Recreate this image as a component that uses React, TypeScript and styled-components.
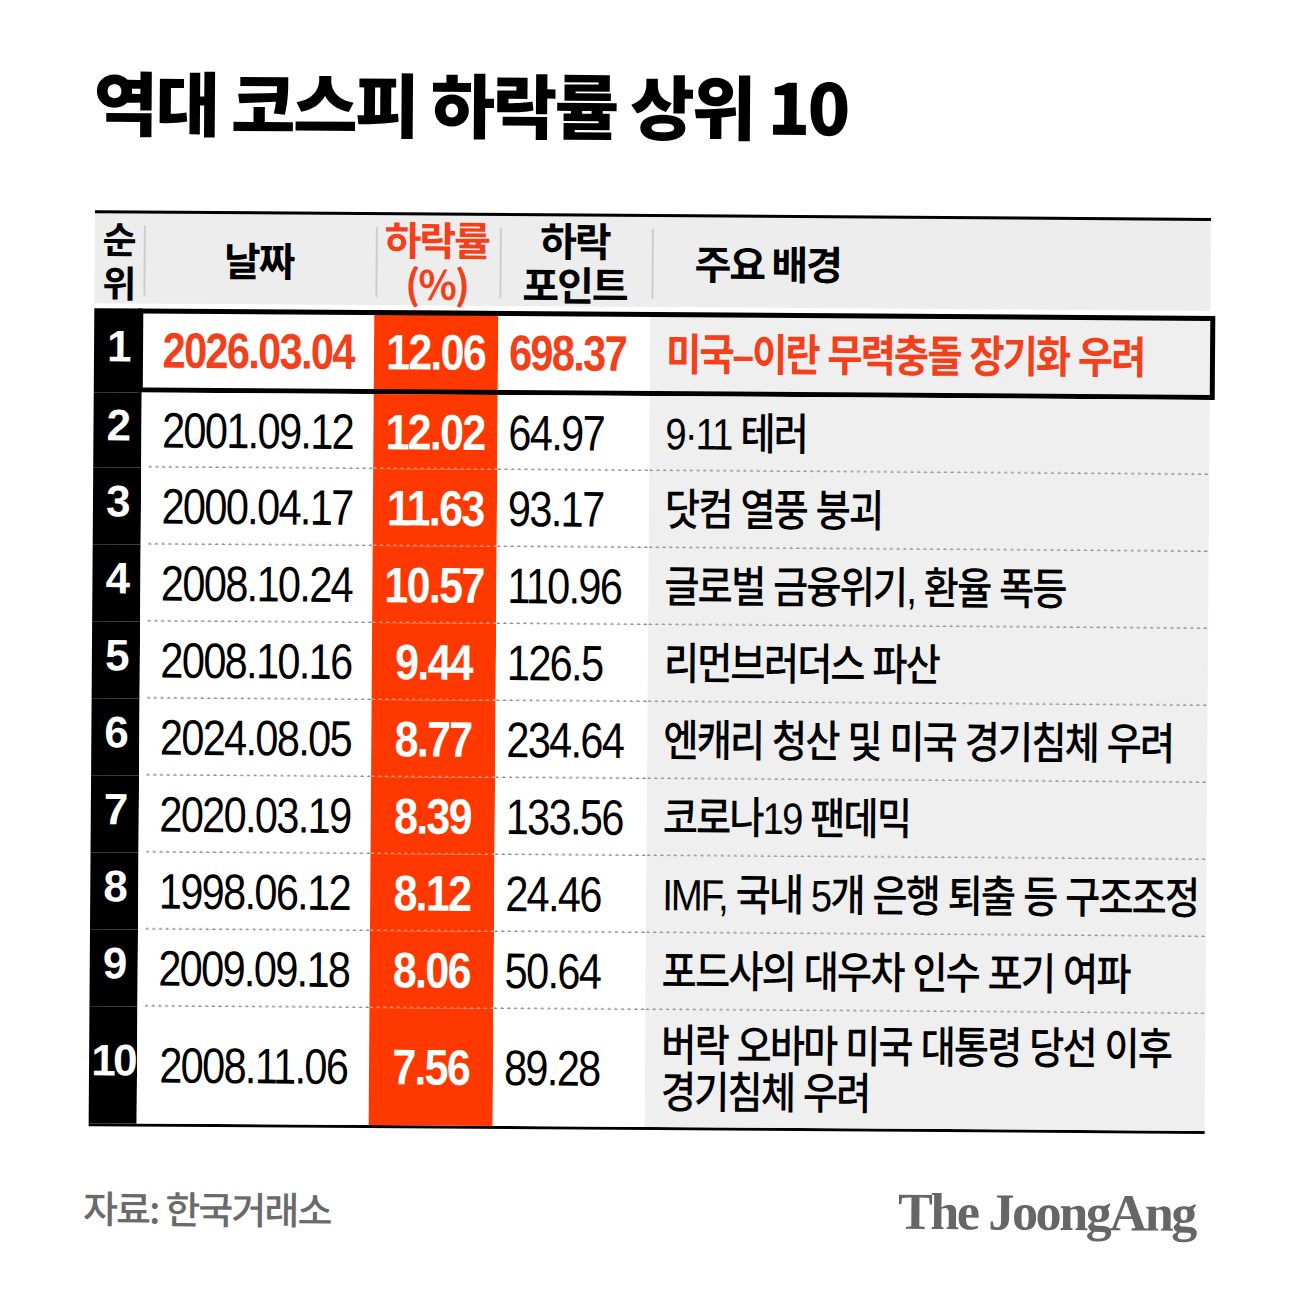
import React from 'react';
import styled, { createGlobalStyle } from 'styled-components';

const RED = '#ff3800';
const RED_TEXT = '#f3401a';
const COLS = '48px 232px 124px 152px 560px';
const LATIN = '"Liberation Sans", "Noto Sans CJK KR", sans-serif';
const KOREAN = '"Noto Sans CJK KR", "Noto Sans", sans-serif';

const GlobalStyle = createGlobalStyle`
  html, body { margin: 0; padding: 0; background: #fff; }
  body { font-family: ${KOREAN}; }
  * { box-sizing: border-box; }
`;

const Frame = styled.div`
  width: 1290px;
  height: 1290px;
  overflow: hidden;
  background: #fff;
`;

const Canvas = styled.div`
  width: 1290px;
  height: 1290px;
  padding: 62px 0 0 92px;
  display: flex;
  flex-direction: column;
  transform: rotate(0.4deg);
  transform-origin: 50% 50%;
`;

const Title = styled.h1`
  margin: 0 0 0 -2px;
  font-family: ${KOREAN};
  font-weight: 900;
  font-size: 70px;
  line-height: 84px;
  letter-spacing: -0.035em;
  color: #000;
`;

const Table = styled.div`
  margin-top: 68px;
  width: 1116px;
  display: flex;
  flex-direction: column;
`;

const HeaderRow = styled.div`
  display: grid;
  grid-template-columns: ${COLS};
  height: 93px;
  border-top: 3px solid #000;
  background: #ededed;
  margin-bottom: 5px;
`;

const HeadCell = styled.div<{ $sep?: boolean; $start?: boolean; $pad?: number; $color?: string }>`
  position: relative;
  display: flex;
  flex-direction: column;
  justify-content: center;
  align-items: ${p => (p.$start ? 'flex-start' : 'center')};
  padding-left: ${p => p.$pad ?? 0}px;
  color: ${p => p.$color ?? '#000'};
  font-family: ${KOREAN};
  font-weight: 700;
  font-size: 40px;
  line-height: 44px;
  letter-spacing: -0.05em;
  text-align: center;
  & > span {
    display: block;
    height: 44px;
  }
  &::before {
    content: '';
    display: ${p => (p.$sep ? 'block' : 'none')};
    position: absolute;
    left: 1px;
    top: 12px;
    bottom: 8px;
    width: 2px;
    background: #cdcdcd;
  }
`;

const RankHead = styled(HeadCell)`
  font-size: 37px;
  padding-top: 2px;
`;

const Row = styled.div<{ $h: number; $boxed?: boolean; $last?: boolean }>`
  position: relative;
  display: grid;
  grid-template-columns: ${COLS};
  height: ${p => p.$h}px;
  border-bottom: ${p => (p.$last ? '3px solid #000' : 'none')};
  &::after {
    content: '';
    display: ${p => (p.$boxed ? 'block' : 'none')};
    position: absolute;
    top: 0;
    bottom: 0;
    left: 44px;
    right: -5px;
    border: 5px solid #000;
    pointer-events: none;
  }
`;

const RankCell = styled.div`
  background: #000;
  color: #fff;
  display: flex;
  align-items: center;
  justify-content: center;
  padding-bottom: 9px;
  font-family: ${LATIN};
  font-weight: 700;
  font-size: 44px;
  letter-spacing: -0.06em;
`;

const DataCell = styled.div<{ $bg: string; $dots?: string; $inset?: number; $start?: boolean; $pad?: number }>`
  position: relative;
  background: ${p => p.$bg};
  display: flex;
  align-items: center;
  justify-content: ${p => (p.$start ? 'flex-start' : 'center')};
  padding-left: ${p => p.$pad ?? 0}px;
  &::after {
    content: '';
    display: ${p => (p.$dots ? 'block' : 'none')};
    position: absolute;
    left: ${p => p.$inset ?? 0}px;
    right: 0;
    bottom: -2px;
    height: 4px;
    background-image: radial-gradient(circle at 2px 2px, ${p => p.$dots} 1.4px, transparent 1.9px);
    background-size: 6.7px 4px;
    background-repeat: repeat-x;
  }
`;

const Squeeze = styled.span<{ $left?: boolean }>`
  display: inline-block;
  white-space: nowrap;
  transform-origin: ${p => (p.$left ? 'left' : 'center')} center;
`;

const NumText = styled(Squeeze)<{ $hl?: boolean }>`
  font-family: ${LATIN};
  font-size: 50px;
  line-height: 1;
  font-weight: ${p => (p.$hl ? 700 : 400)};
  color: ${p => (p.$hl ? RED_TEXT : '#000')};
  letter-spacing: -0.04em;
  transform: scaleX(0.83);
`;

const RateText = styled(Squeeze)`
  font-family: ${LATIN};
  font-size: 50px;
  line-height: 1;
  font-weight: 700;
  color: #fff;
  letter-spacing: -0.04em;
  transform: scaleX(0.86);
`;

const ReasonText = styled(Squeeze)<{ $hl?: boolean }>`
  font-family: ${LATIN};
  font-size: 44px;
  line-height: 47px;
  font-weight: ${p => (p.$hl ? 700 : 500)};
  color: ${p => (p.$hl ? RED_TEXT : '#000')};
  letter-spacing: -0.05em;
  transform: scaleX(0.87);
`;

const Footer = styled.div`
  margin: 53px 0 0 -5px;
  width: 1112px;
  height: 54px;
  display: flex;
  align-items: center;
  justify-content: space-between;
`;

const Source = styled.div`
  font-family: ${KOREAN};
  font-weight: 500;
  font-size: 38px;
  letter-spacing: -0.05em;
  color: #6a6a6a;
`;

const Logo = styled.div`
  font-family: "Liberation Serif", "DejaVu Serif", serif;
  font-weight: 700;
  font-size: 52px;
  line-height: 1;
  letter-spacing: -0.045em;
  color: #666;
`;

type Item = {
  rank: string;
  date: string;
  rate: string;
  pts: string;
  reason: string[];
  hl?: boolean;
};

const rows: Item[] = [
  { rank: '1', date: '2026.03.04', rate: '12.06', pts: '698.37', reason: ['미국–이란 무력충돌 장기화 우려'], hl: true },
  { rank: '2', date: '2001.09.12', rate: '12.02', pts: '64.97', reason: ['9·11 테러'] },
  { rank: '3', date: '2000.04.17', rate: '11.63', pts: '93.17', reason: ['닷컴 열풍 붕괴'] },
  { rank: '4', date: '2008.10.24', rate: '10.57', pts: '110.96', reason: ['글로벌 금융위기, 환율 폭등'] },
  { rank: '5', date: '2008.10.16', rate: '9.44', pts: '126.5', reason: ['리먼브러더스 파산'] },
  { rank: '6', date: '2024.08.05', rate: '8.77', pts: '234.64', reason: ['엔캐리 청산 및 미국 경기침체 우려'] },
  { rank: '7', date: '2020.03.19', rate: '8.39', pts: '133.56', reason: ['코로나19 팬데믹'] },
  { rank: '8', date: '1998.06.12', rate: '8.12', pts: '24.46', reason: ['IMF, 국내 5개 은행 퇴출 등 구조조정'] },
  { rank: '9', date: '2009.09.18', rate: '8.06', pts: '50.64', reason: ['포드사의 대우차 인수 포기 여파'] },
  { rank: '10', date: '2008.11.06', rate: '7.56', pts: '89.28', reason: ['버락 오바마 미국 대통령 당선 이후', '경기침체 우려'] },
];

const heightOf = (i: number) => {
  if (i === 0) return 84;
  if (i === 1) return 75;
  if (i === rows.length - 1) return 120;
  return 77;
};

export default function App() {
  return (
    <Frame>
      <GlobalStyle />
      <Canvas>
        <Title>역대 코스피 하락률 상위 10</Title>
        <Table>
          <HeaderRow>
            <RankHead>
              <span>순</span>
              <span>위</span>
            </RankHead>
            <HeadCell $sep>날짜</HeadCell>
            <HeadCell $sep $color={RED_TEXT}>
              <span>하락률</span>
              <span>(%)</span>
            </HeadCell>
            <HeadCell $sep>
              <span>하락</span>
              <span>포인트</span>
            </HeadCell>
            <HeadCell $sep $start $pad={44}>
              주요 배경
            </HeadCell>
          </HeaderRow>
          {rows.map((r, i) => {
            const last = i === rows.length - 1;
            const dots = !r.hl && !last;
            return (
              <Row key={r.rank} $h={heightOf(i)} $boxed={r.hl} $last={last}>
                <RankCell>{r.rank}</RankCell>
                <DataCell $bg="#fff" $dots={dots ? '#8e8e8e' : undefined} $inset={7}>
                  <NumText $hl={r.hl}>{r.date}</NumText>
                </DataCell>
                <DataCell $bg={RED} $dots={dots ? '#e3a591' : undefined}>
                  <RateText>{r.rate}</RateText>
                </DataCell>
                <DataCell $bg="#fff" $dots={dots ? '#8e8e8e' : undefined} $start $pad={11}>
                  <NumText $hl={r.hl} $left>
                    {r.pts}
                  </NumText>
                </DataCell>
                <DataCell $bg="#efefef" $dots={dots ? '#959595' : undefined} $start $pad={16}>
                  <ReasonText $hl={r.hl} $left>
                    {r.reason.map((line, k) => (
                      <React.Fragment key={k}>
                        {k > 0 && <br />}
                        {line}
                      </React.Fragment>
                    ))}
                  </ReasonText>
                </DataCell>
              </Row>
            );
          })}
        </Table>
        <Footer>
          <Source>자료: 한국거래소</Source>
          <Logo>The JoongAng</Logo>
        </Footer>
      </Canvas>
    </Frame>
  );
}
